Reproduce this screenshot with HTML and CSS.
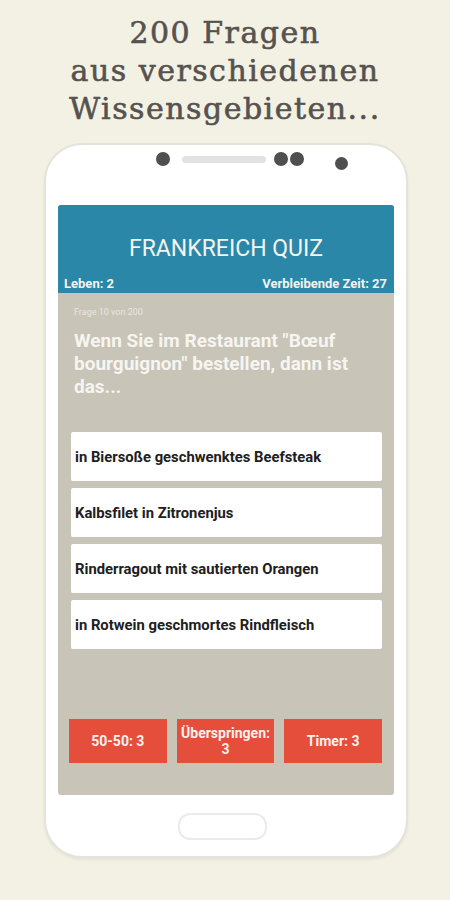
FILE: index.html
```html
<!DOCTYPE html>
<html lang="de">
<head>
<meta charset="utf-8">
<title>Frankreich Quiz</title>
<link rel="stylesheet" href="styles.css">
</head>
<body>
<div class="headline">200 Fragen<br>aus verschiedenen<br>Wissensgebieten...</div>
<div class="phone">
  <div class="phone-top">
    <span class="dot"></span>
    <span class="speaker"></span>
    <span class="dot dot-pair"></span>
    <span class="dot"></span>
    <span class="dot dot-cam"></span>
  </div>
  <div class="screen">
    <header class="app-bar">
      <h1 class="app-title">FRANKREICH QUIZ</h1>
      <div class="stats"><span>Leben: 2</span><span>Verbleibende Zeit: 27</span></div>
    </header>
    <main class="quiz">
      <div class="counter">Frage 10 von 200</div>
      <div class="question">Wenn Sie im Restaurant "Bœuf bourguignon" bestellen, dann ist das...</div>
      <div class="answers">
        <div class="answer">in Biersoße geschwenktes Beefsteak</div>
        <div class="answer">Kalbsfilet in Zitronenjus</div>
        <div class="answer">Rinderragout mit sautierten Orangen</div>
        <div class="answer">in Rotwein geschmortes Rindfleisch</div>
      </div>
      <div class="jokers">
        <div class="joker">50-50: 3</div>
        <div class="joker">Überspringen: 3</div>
        <div class="joker">Timer: 3</div>
      </div>
    </main>
  </div>
  <div class="phone-bottom"><div class="home"></div></div>
</div>
</body>
</html>
```
FILE: styles.css
```css
* { box-sizing: border-box; }
html, body { margin: 0; padding: 0; }
body {
  width: 450px;
  height: 900px;
  background: #f3f1e4;
  font-family: Roboto, "Liberation Sans", sans-serif;
  overflow: hidden;
}
.headline {
  padding-top: 14px;
  height: 143px;
  text-align: center;
  font-family: "DejaVu Serif", "Liberation Serif", serif;
  font-weight: 400;
  font-size: 30px;
  line-height: 38px;
  letter-spacing: 1.5px;
  color: #56524f;
  -webkit-text-stroke: 0.6px #56524f;
}
.phone {
  margin-left: 44px;
  width: 364px;
  height: 715px;
  background: #ffffff;
  border: 2px solid #e4e3dc;
  border-radius: 38px;
  box-shadow: 0 2px 3px rgba(0,0,0,0.06);
  display: flex;
  flex-direction: column;
  align-items: center;
}
.phone-top {
  height: 60px;
  width: 100%;
  display: flex;
  align-items: flex-start;
  padding-top: 7px;
  padding-left: 110px;
}
.dot {
  width: 14px;
  height: 14px;
  border-radius: 50%;
  background: #4f4f4f;
  flex: none;
}
.speaker {
  width: 84px;
  height: 7px;
  border-radius: 4px;
  background: #e2e2e2;
  margin: 4px 8px 0 12px;
}
.dot-pair { margin-right: 2px; }
.dot-cam { margin-left: 31px; margin-top: 5px; width: 13px; height: 13px; }
.screen {
  width: 336px;
  height: 590px;
  border-radius: 3px;
  overflow: hidden;
  display: flex;
  flex-direction: column;
  background: #c8c4b8;
}
.app-bar {
  background: #2b87a8;
  height: 88px;
  color: #f4f4f0;
  display: flex;
  flex-direction: column;
  justify-content: flex-end;
}
.app-title {
  margin: 0;
  font-weight: 400;
  font-size: 23px;
  text-align: center;
  line-height: 26px;
  padding-bottom: 14px;
}
.stats {
  display: flex;
  justify-content: space-between;
  font-weight: 700;
  font-size: 13px;
  line-height: 15px;
  padding: 0 7px 0 6px;
  height: 17px;
}
.quiz {
  flex: 1;
  padding: 13px 12px 0 13px;
  display: flex;
  flex-direction: column;
}
.counter {
  font-size: 9px;
  color: #e8e6df;
  padding-left: 3px;
  line-height: 12px;
}
.question {
  margin-top: 11px;
  padding-left: 3px;
  font-weight: 700;
  font-size: 19px;
  line-height: 23px;
  color: #f6f5f0;
  height: 103px;
}
.answers {
  display: flex;
  flex-direction: column;
  gap: 7px;
}
.answer {
  height: 49px;
  background: #ffffff;
  border-radius: 2px;
  display: flex;
  align-items: center;
  padding-left: 4px;
  font-weight: 700;
  font-size: 14.8px;
  color: #202020;
}
.jokers {
  margin-top: 70px;
  display: flex;
  gap: 10px;
  margin-left: -2px;
}
.joker {
  flex: 1;
  height: 44px;
  background: #e44e3a;
  color: #fbf2ee;
  font-weight: 700;
  font-size: 14px;
  line-height: 16px;
  text-align: center;
  display: flex;
  align-items: center;
  justify-content: center;
  padding: 0 3px;
}
.phone-bottom {
  flex: 1;
  width: 100%;
  display: flex;
  justify-content: center;
  padding-top: 18px;
}
.home {
  width: 89px;
  height: 27px;
  border: 2px solid #ebebeb;
  border-radius: 12px;
  margin-left: -8px;
}
```
